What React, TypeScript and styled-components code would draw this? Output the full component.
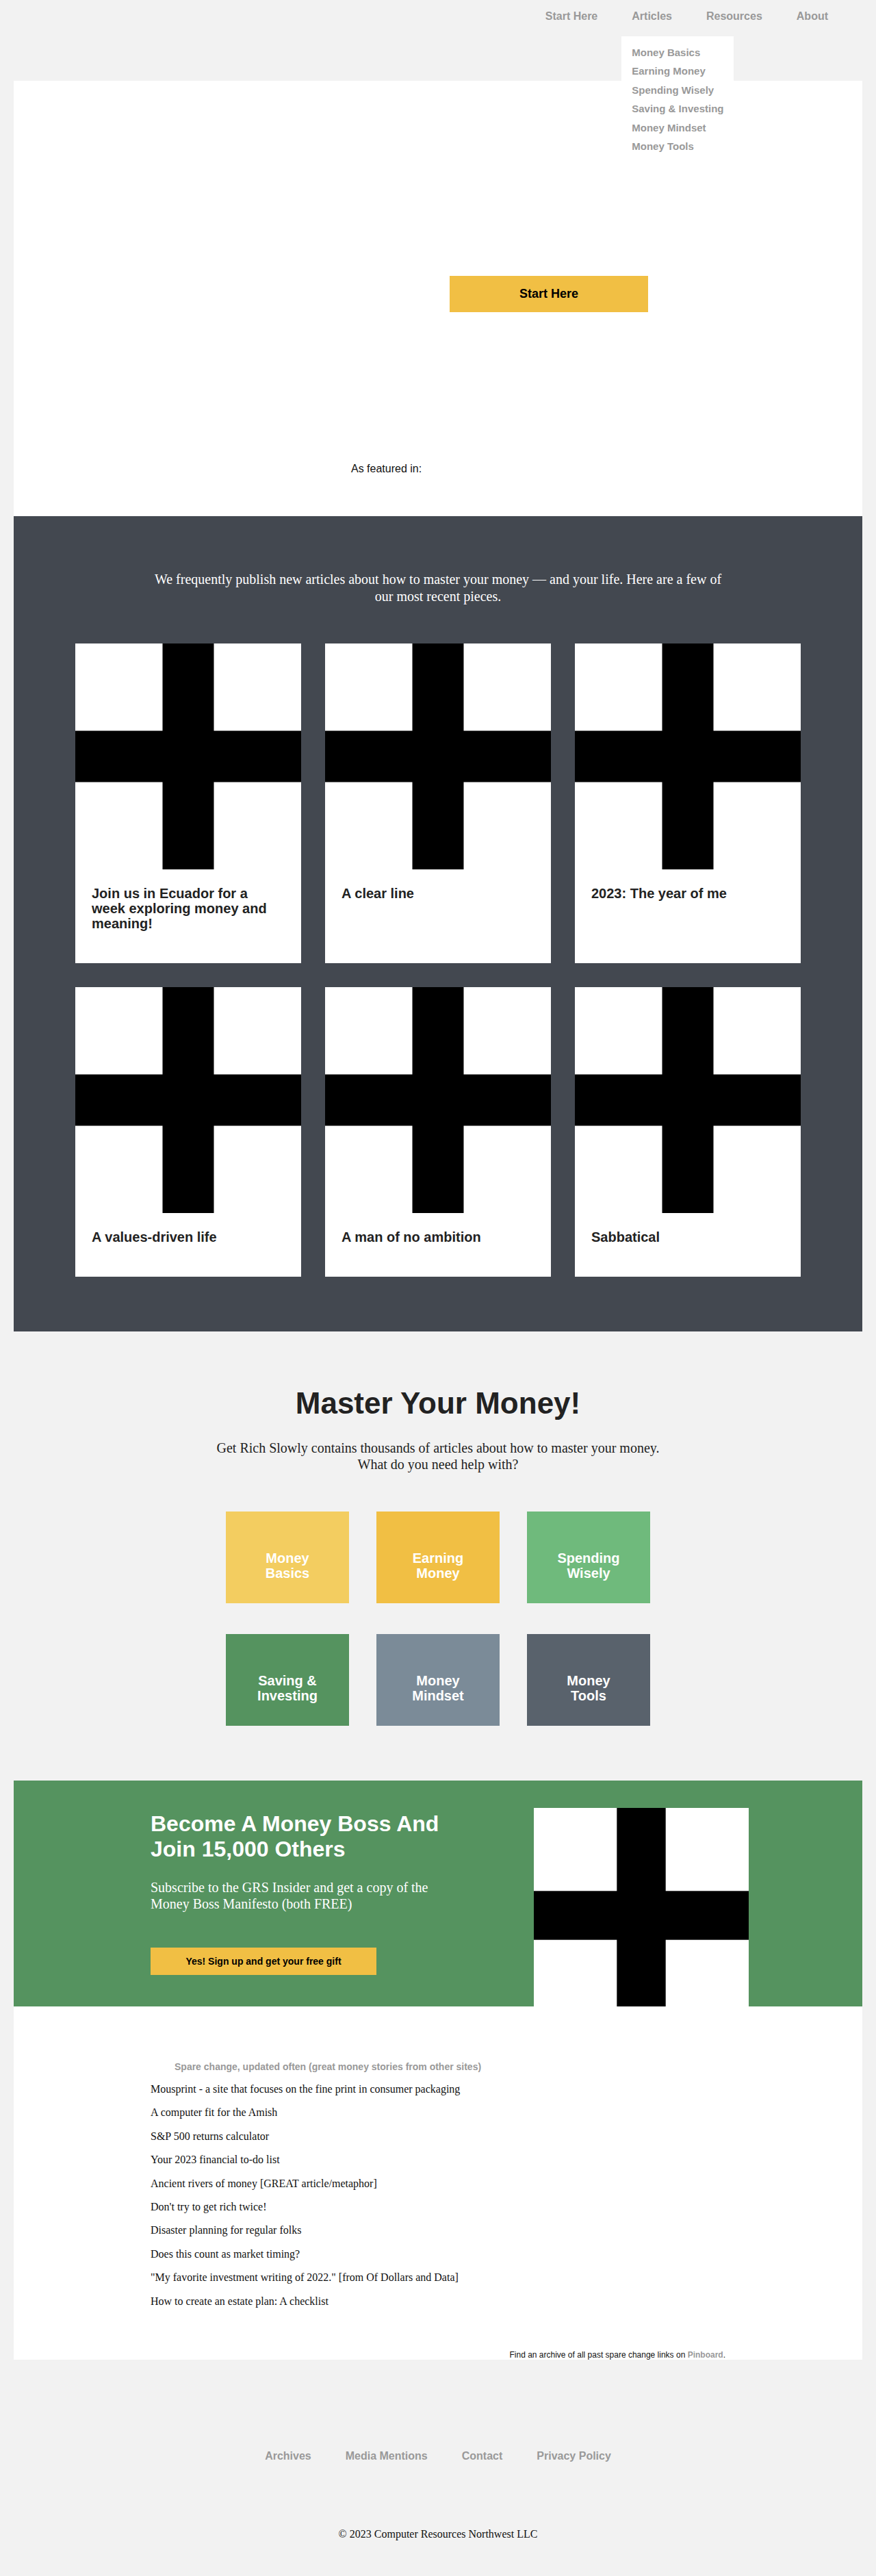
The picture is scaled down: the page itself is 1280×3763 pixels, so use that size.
import React from "react";
import styled, { createGlobalStyle } from "styled-components";

const sans = `"Liberation Sans", Arial, Helvetica, sans-serif`;
const serif = `"Liberation Serif", "Times New Roman", Times, serif`;

const GlobalStyle = createGlobalStyle`
  html, body { margin: 0; padding: 0; background: #f2f2f2; }
  body { font-family: ${sans}; color: #111; }
  *, *::before, *::after { box-sizing: border-box; }
`;

const Page = styled.div`
  padding: 0 20px;
`;

/* ---------- Header ---------- */
const Header = styled.header`
  height: 118px;
  display: flex;
  justify-content: flex-end;
  padding: 15px 50px 0 0;
`;

const NavList = styled.ul`
  list-style: none;
  margin: 0;
  padding: 0;
  display: flex;
  gap: 50px;
  height: 18px;
`;

const NavItem = styled.li`
  position: relative;
  font: bold 16px/18px ${sans};
  color: #999;
`;

const Dropdown = styled.ul`
  position: absolute;
  top: 38px;
  left: -15px;
  list-style: none;
  margin: 0;
  padding: 10px 15px;
  background: #fff;
  width: max-content;
  z-index: 5;
`;

const DropItem = styled.li`
  font: bold 15px/27.4px ${sans};
  color: #999;
  white-space: nowrap;
`;

/* ---------- Hero ---------- */
const Hero = styled.section`
  background: #fff;
  height: 636px;
  padding-top: 285px;
`;

const HeroButton = styled.a`
  display: flex;
  align-items: center;
  justify-content: center;
  width: 290px;
  height: 53px;
  margin-left: 637px;
  background: #f1bf44;
  color: #000;
  font: bold 18px ${sans};
  text-decoration: none;
`;

const Featured = styled.p`
  margin: 220px 0 0 493px;
  font: 16px/18px ${sans};
  color: #111;
`;

/* ---------- Recent articles ---------- */
const Recent = styled.section`
  background: #434850;
  padding: 80px 0;
`;

const Intro = styled.p`
  max-width: 850px;
  margin: 0 auto;
  text-align: center;
  color: #fff;
  font: 20px/25px ${serif};
`;

const CardGrid = styled.div`
  display: grid;
  grid-template-columns: repeat(3, 330px);
  gap: 35px;
  justify-content: center;
  margin-top: 56px;
`;

const Card = styled.article`
  background: #fff;
  display: flex;
  flex-direction: column;
`;

const ImageFrame = styled.div<{ $size: number }>`
  width: ${(p) => p.$size}px;
  height: ${(p) => p.$size}px;
  flex-shrink: 0;
  svg {
    display: block;
    width: 100%;
    height: 100%;
  }
`;

const CardTitle = styled.h3`
  margin: 0;
  padding: 24px 40px 47px 24px;
  font: bold 20px/22px ${sans};
  color: #222;
`;

/* ---------- Master your money ---------- */
const Master = styled.section`
  padding: 80px 0;
  text-align: center;
`;

const MasterTitle = styled.h2`
  margin: 0;
  font: bold 44px/50px ${sans};
  color: #222;
`;

const MasterLead = styled.p`
  max-width: 680px;
  margin: 28px auto 0;
  font: 20px/24px ${serif};
  color: #222;
`;

const TileGrid = styled.div`
  display: grid;
  grid-template-columns: repeat(3, 180px);
  column-gap: 40px;
  row-gap: 45px;
  justify-content: center;
  margin-top: 57px;
`;

const Tile = styled.a<{ $bg: string }>`
  display: block;
  height: 134px;
  padding: 57px 35px 0;
  background: ${(p) => p.$bg};
  color: #fff;
  font: bold 20px/22px ${sans};
  text-decoration: none;
  text-align: center;
`;

/* ---------- Banner ---------- */
const Banner = styled.section`
  background: #55935f;
  height: 330px;
  overflow: hidden;
  display: flex;
  padding-left: 200px;
`;

const BannerText = styled.div`
  width: 440px;
  padding-top: 45px;
  flex-shrink: 0;
`;

const BannerTitle = styled.h2`
  margin: 0;
  font: bold 32px/37px ${sans};
  color: #fff;
`;

const BannerLead = styled.p`
  margin: 25px 0 0;
  font: 20px/24px ${serif};
  color: #fff;
`;

const BannerButton = styled.a`
  display: flex;
  align-items: center;
  justify-content: center;
  width: 330px;
  height: 40px;
  margin-top: 52px;
  background: #f1bf44;
  color: #000;
  font: bold 14px ${sans};
  text-decoration: none;
`;

const BannerImage = styled(ImageFrame)`
  margin: 40px 0 0 120px;
`;

/* ---------- Spare change ---------- */
const Spare = styled.section`
  background: #fff;
  padding: 80px 0 0;
`;

const SpareInner = styled.div`
  width: 840px;
  margin: 0 auto;
`;

const SpareHeading = styled.h4`
  margin: 0 0 16px;
  padding-left: 35px;
  font: bold 14px/16px ${sans};
  color: #999;
`;

const SpareLink = styled.p`
  margin: 16px 0;
  font: 16px/18.4px ${serif};
  color: #111;
`;

const ArchiveNote = styled.p`
  margin: 63px 0 0;
  text-align: right;
  font: 12px/13px ${sans};
  color: #111;
`;

const Pinboard = styled.a`
  color: #999;
  font-weight: bold;
  text-decoration: none;
`;

/* ---------- Footer ---------- */
const Footer = styled.footer`
  padding: 132px 0 51px;
  text-align: center;
`;

const FooterNav = styled.nav`
  display: flex;
  justify-content: center;
  gap: 50px;
`;

const FooterLink = styled.a`
  font: bold 16px/18px ${sans};
  color: #999;
  text-decoration: none;
`;

const Copyright = styled.p`
  margin: 96px 0 0;
  font: 16px/18px ${serif};
  color: #111;
`;

const Cross: React.FC = () => (
  <svg viewBox="0 0 330 330" preserveAspectRatio="none" aria-hidden="true">
    <rect width="330" height="330" fill="#fff" />
    <rect x="127.5" y="0" width="75" height="330" fill="#000" />
    <rect x="0" y="127.5" width="330" height="75" fill="#000" />
  </svg>
);

const articles = [
  "Join us in Ecuador for a week exploring money and meaning!",
  "A clear line",
  "2023: The year of me",
  "A values-driven life",
  "A man of no ambition",
  "Sabbatical",
];

const tiles = [
  { label: "Money Basics", bg: "#f3cd60" },
  { label: "Earning Money", bg: "#f1bf44" },
  { label: "Spending Wisely", bg: "#6fba7c" },
  { label: "Saving & Investing", bg: "#55935f" },
  { label: "Money Mindset", bg: "#7b8b98" },
  { label: "Money Tools", bg: "#59626c" },
];

const spareLinks = [
  "Mousprint - a site that focuses on the fine print in consumer packaging",
  "A computer fit for the Amish",
  "S&P 500 returns calculator",
  "Your 2023 financial to-do list",
  "Ancient rivers of money [GREAT article/metaphor]",
  "Don't try to get rich twice!",
  "Disaster planning for regular folks",
  "Does this count as market timing?",
  "\"My favorite investment writing of 2022.\" [from Of Dollars and Data]",
  "How to create an estate plan: A checklist",
];

const dropdownItems = [
  "Money Basics",
  "Earning Money",
  "Spending Wisely",
  "Saving & Investing",
  "Money Mindset",
  "Money Tools",
];

export default function App() {
  return (
    <>
      <GlobalStyle />
      <Page>
        <Header>
          <NavList>
            <NavItem>Start Here</NavItem>
            <NavItem>
              Articles
              <Dropdown>
                {dropdownItems.map((d) => (
                  <DropItem key={d}>{d}</DropItem>
                ))}
              </Dropdown>
            </NavItem>
            <NavItem>Resources</NavItem>
            <NavItem>About</NavItem>
          </NavList>
        </Header>

        <Hero>
          <HeroButton href="#">Start Here</HeroButton>
          <Featured>As featured in:</Featured>
        </Hero>

        <Recent>
          <Intro>
            We frequently publish new articles about how to master your money — and your life. Here are a few of
            our most recent pieces.
          </Intro>
          <CardGrid>
            {articles.map((a) => (
              <Card key={a}>
                <ImageFrame $size={330}>
                  <Cross />
                </ImageFrame>
                <CardTitle>{a}</CardTitle>
              </Card>
            ))}
          </CardGrid>
        </Recent>

        <Master>
          <MasterTitle>Master Your Money!</MasterTitle>
          <MasterLead>
            Get Rich Slowly contains thousands of articles about how to master your money. What do you need help
            with?
          </MasterLead>
          <TileGrid>
            {tiles.map((t) => (
              <Tile key={t.label} href="#" $bg={t.bg}>
                {t.label}
              </Tile>
            ))}
          </TileGrid>
        </Master>

        <Banner>
          <BannerText>
            <BannerTitle>Become A Money Boss And Join 15,000 Others</BannerTitle>
            <BannerLead>Subscribe to the GRS Insider and get a copy of the Money Boss Manifesto (both FREE)</BannerLead>
            <BannerButton href="#">Yes! Sign up and get your free gift</BannerButton>
          </BannerText>
          <BannerImage $size={314}>
            <Cross />
          </BannerImage>
        </Banner>

        <Spare>
          <SpareInner>
            <SpareHeading>Spare change, updated often (great money stories from other sites)</SpareHeading>
            {spareLinks.map((l) => (
              <SpareLink key={l}>{l}</SpareLink>
            ))}
            <ArchiveNote>
              Find an archive of all past spare change links on <Pinboard href="#">Pinboard</Pinboard>.
            </ArchiveNote>
          </SpareInner>
        </Spare>

        <Footer>
          <FooterNav>
            <FooterLink href="#">Archives</FooterLink>
            <FooterLink href="#">Media Mentions</FooterLink>
            <FooterLink href="#">Contact</FooterLink>
            <FooterLink href="#">Privacy Policy</FooterLink>
          </FooterNav>
          <Copyright>© 2023 Computer Resources Northwest LLC</Copyright>
        </Footer>
      </Page>
    </>
  );
}
